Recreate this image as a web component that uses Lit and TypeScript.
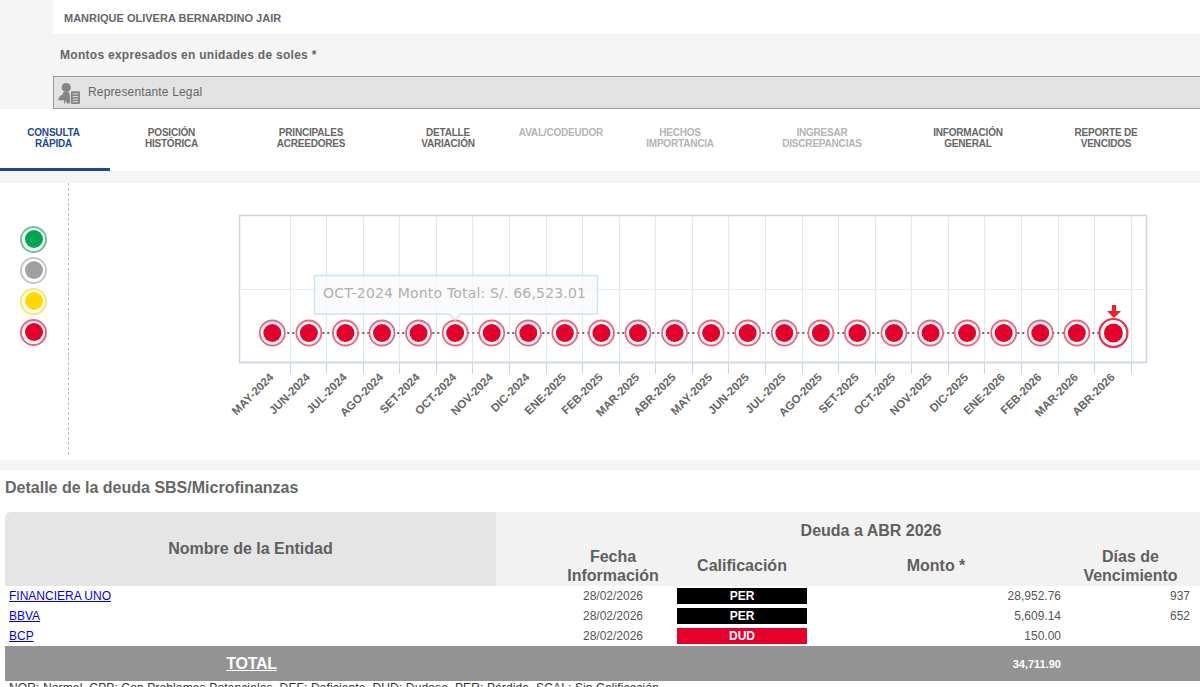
import { LitElement, html, css, svg } from "lit";
import { customElement } from "lit/decorators.js";

const MONTHS = [
  "MAY-2024","JUN-2024","JUL-2024","AGO-2024","SET-2024","OCT-2024","NOV-2024","DIC-2024",
  "ENE-2025","FEB-2025","MAR-2025","ABR-2025","MAY-2025","JUN-2025","JUL-2025","AGO-2025",
  "SET-2025","OCT-2025","NOV-2025","DIC-2025","ENE-2026","FEB-2026","MAR-2026","ABR-2026",
];
const X0 = 272.3;
const STEP = 36.57;
const CY = 333;

const TABS: { label: string[]; cls: string }[] = [
  { label: ["CONSULTA", "RÁPIDA"], cls: "active" },
  { label: ["POSICIÓN", "HISTÓRICA"], cls: "" },
  { label: ["PRINCIPALES", "ACREEDORES"], cls: "" },
  { label: ["DETALLE", "VARIACIÓN"], cls: "" },
  { label: ["AVAL/CODEUDOR"], cls: "off" },
  { label: ["HECHOS", "IMPORTANCIA"], cls: "off" },
  { label: ["INGRESAR", "DISCREPANCIAS"], cls: "off" },
  { label: ["INFORMACIÓN", "GENERAL"], cls: "" },
  { label: ["REPORTE DE", "VENCIDOS"], cls: "" },
];

const ROWS = [
  { name: "FINANCIERA UNO", date: "28/02/2026", cal: "PER", cls: "per", monto: "28,952.76", dias: "937" },
  { name: "BBVA", date: "28/02/2026", cal: "PER", cls: "per", monto: "5,609.14", dias: "652" },
  { name: "BCP", date: "28/02/2026", cal: "DUD", cls: "dud", monto: "150.00", dias: "" },
];

const LIGHTS = ["green", "gray", "yellow", "red"];

@customElement("app-root")
export class AppRoot extends LitElement {
  static styles = css`
    :host {
      display: block;
      width: 1200px;
      height: 687px;
      overflow: hidden;
      background: #f5f5f5;
      font-family: "Liberation Sans", Arial, sans-serif;
      color: #666;
    }
    .name {
      margin-left: 53px;
      height: 34px;
      background: #fff;
      padding-left: 11px;
      font-size: 11px;
      font-weight: 700;
      line-height: 37px;
      color: #666;
      box-sizing: border-box;
    }
    .montos {
      height: 42px;
      padding-left: 60px;
      font-size: 12px;
      font-weight: 700;
      line-height: 42px;
      letter-spacing: 0.28px;
      color: #666;
      box-sizing: border-box;
    }
    .rep {
      margin-left: 53px;
      height: 33px;
      box-sizing: border-box;
      background: #e3e3e3;
      border: 1px solid #999;
      border-right: 0;
      display: flex;
      align-items: center;
      gap: 8px;
      padding-left: 4px;
      font-size: 12px;
      letter-spacing: 0.15px;
      color: #666;
    }
    .rep span { padding-bottom: 2px; }
    .rep svg { display: block; }
    .tabs {
      display: grid;
      grid-template-columns: 110px 123px 156px 118px 108px 130px 154px 138px 138px 25px;
      height: 62px;
      background: #fff;
    }
    .tab {
      box-sizing: border-box;
      padding-top: 18px;
      text-align: center;
      font-size: 10px;
      letter-spacing: -0.2px;
      line-height: 11px;
      font-weight: 700;
      color: #666;
    }
    .tab span { display: block; }
    .tab.active {
      color: #1b4a91;
      border-bottom: 3px solid #1b4a91;
      padding-right: 3px;
    }
    .tab.off { color: #b4b4b4; }
    .gap { height: 12px; }
    .chart {
      display: flex;
      height: 277px;
      background: #fff;
    }
    .side {
      width: 69px;
      height: 272px;
      box-sizing: border-box;
      border-right: 1px dashed #bbb;
      display: flex;
      flex-direction: column;
      align-items: flex-start;
      gap: 4px;
      padding: 42.5px 0 0 20px;
      flex: none;
    }
    .light {
      width: 27px;
      height: 27px;
      box-sizing: border-box;
      border-radius: 50%;
      border-width: 2px;
      border-style: solid;
      padding: 2.5px;
    }
    .light i { display: block; width: 100%; height: 100%; border-radius: 50%; }
    .light.green { border-color: #6cc598; } .light.green i { background: #00a651; }
    .light.gray { border-color: #c6c6c8; } .light.gray i { background: #a0a0a3; }
    .light.yellow { border-color: #ffe566; } .light.yellow i { background: #ffd800; }
    .light.red { border-color: #f0617a; } .light.red i { background: #e4002b; }
    .plot { display: block; flex: none; }
    .axis { font-size: 11.5px; font-weight: 700; fill: #666; font-family: "Liberation Sans", Arial, sans-serif; }
    .tip { font-size: 14px; fill: #b0b0b0; font-family: "DejaVu Sans", sans-serif; letter-spacing: 0.18px; }
    .detail {
      background: #fff;
      margin-top: 10px;
      height: 217px;
      overflow: hidden;
    }
    h2 {
      margin: 0;
      padding: 9px 0 0 5px;
      height: 42px;
      box-sizing: border-box;
      font-size: 16px;
      line-height: 18px;
      font-weight: 700;
      color: #666;
    }
    .table {
      margin-left: 5px;
      display: grid;
      grid-template-columns: 491px 57px 120px 138px 250px 139px;
    }
    .th {
      background: #f2f2f2;
      font-size: 16px;
      font-weight: 700;
      line-height: 19.5px;
      color: #5f5f5f;
      text-align: center;
    }
    .th.entity {
      grid-row: 1 / span 2;
      background: #e5e5e5;
      border-top-left-radius: 6px;
      display: flex;
      align-items: center;
      justify-content: center;
      padding-bottom: 1px;
      box-sizing: border-box;
    }
    .th.debt {
      grid-column: 2 / span 5;
      height: 33px;
      line-height: 37px;
      padding-left: 46px;
      box-sizing: border-box;
    }
    .th.sub {
      height: 41px;
      display: flex;
      align-items: center;
      justify-content: center;
      padding-top: 1px;
      box-sizing: border-box;
    }
    .td {
      height: 20px;
      line-height: 20px;
      font-size: 12px;
      color: #555;
    }
    .td a { color: #0000ee; text-decoration: underline; padding-left: 4px; }
    .td.c { text-align: center; }
    .td.r { text-align: right; }
    .td.d { padding-right: 10px; }
    .badge {
      display: block;
      margin: 2px 4px;
      height: 16px;
      line-height: 16px;
      text-align: center;
      font-weight: 700;
      color: #fff;
    }
    .badge.per { background: #000; }
    .badge.dud { background: #e4002b; }
    .total {
      grid-column: 1 / -1;
      display: grid;
      grid-template-columns: 491px 57px 120px 138px 250px 139px;
      height: 35px;
      background: #939393;
      color: #fff;
      font-weight: 700;
      align-items: center;
    }
    .total u { font-size: 16px; text-align: center; padding-left: 2px; letter-spacing: -0.3px; }
    .total b { grid-column: 5; font-size: 11px; text-align: right; }
    .legend {
      margin: 1px 0 0 9px;
      font-size: 12px;
      line-height: 13px;
      letter-spacing: 0.13px;
      color: #333;
      white-space: nowrap;
    }
  `;

  private marker(x: number, big: boolean) {
    return svg`
      <circle cx=${x} cy=${CY} r=${big ? 14 : 12.5} fill="#fff" stroke=${big ? "#e8304f" : "#f0617a"} stroke-width=${big ? 2.2 : 1.8}></circle>
      <circle cx=${x} cy=${CY} r=${big ? 9.5 : 9} fill="#e4002b"></circle>
    `;
  }

  private chart() {
    const xs = MONTHS.map((_, i) => X0 + i * STEP);
    return html`<svg class="plot" width="1131" height="277" viewBox="69 183 1131 277">
      <rect x="239.5" y="215.5" width="907" height="147" fill="#fff" stroke="#d2d4da" stroke-width="1.5"></rect>
      <line x1="239.5" x2="1146.5" y1="289.5" y2="289.5" stroke="#ececec" stroke-width="1.2"></line>
      ${xs.map((c) => c + STEP / 2).map(
        (x) => svg`
          <line x1=${Math.round(x) - 0.5} x2=${Math.round(x) - 0.5} y1="216" y2="362" stroke="#e4e7ef" stroke-width="1.2"></line>
          <line x1=${Math.round(x) - 0.5} x2=${Math.round(x) - 0.5} y1="362" y2="374" stroke="#ccd6eb" stroke-width="1.2"></line>`
      )}
      <line x1="239" x2="1147" y1="362.5" y2="362.5" stroke="#ccd6eb" stroke-width="1.5"></line>
      <line x1=${X0} x2=${xs[23]} y1=${CY} y2=${CY} stroke="#666" stroke-width="2" stroke-dasharray="2 3"></line>
      ${xs.map((x, i) => this.marker(x, i === 23))}
      <path d="M1112 305h4v6h5l-7 7-7-7h5z" fill="#e8212e"></path>
      ${MONTHS.map(
        (m, i) => svg`<text class="axis" text-anchor="end" transform="translate(${xs[i] + 2} 378) rotate(-45)">${m}</text>`
      )}
      <path d="M314.5 275.5h283v38.5H461l-6 6-6-6H314.5z" fill="#fafafa" fill-opacity="0.72" stroke="#cfe2f5" stroke-width="1.5"></path>
      <text class="tip" x="323" y="298">OCT-2024 Monto Total: S/. 66,523.01</text>
    </svg>`;
  }

  render() {
    return html`
      <div class="name">MANRIQUE OLIVERA BERNARDINO JAIR</div>
      <div class="montos">Montos expresados en unidades de soles *</div>
      <div class="rep">
        <svg width="22" height="22" viewBox="0 0 24 24" fill="#858585">
          <circle cx="9" cy="6" r="5"></circle>
          <path d="M6 11h6l.5 3H13v9.5H9.5l-1-4-1 4H6.5v-3.5L.5 20c-.6-2.5 1.3-5 4.5-6.5z"></path>
          <rect x="14" y="10" width="10" height="14" rx="1.4"></rect>
          <path d="M16 13h6M16 15.8h6M16 18.6h6M16 21.4h6" stroke="#e3e3e3" stroke-width="1"></path>
        </svg>
        <span>Representante Legal</span>
      </div>
      <nav class="tabs">
        ${TABS.map(
          (t) => html`<div class="tab ${t.cls}">${t.label.map((l) => html`<span>${l}</span>`)}</div>`
        )}
      </nav>
      <div class="gap"></div>
      <section class="chart">
        <div class="side">
          ${LIGHTS.map((l) => html`<div class="light ${l}"><i></i></div>`)}
        </div>
        ${this.chart()}
      </section>
      <section class="detail">
        <h2>Detalle de la deuda SBS/Microfinanzas</h2>
        <div class="table">
          <div class="th entity">Nombre de la Entidad</div>
          <div class="th debt">Deuda a ABR 2026</div>
          <div class="th sub"></div>
          <div class="th sub">Fecha<br />Información</div>
          <div class="th sub">Calificación</div>
          <div class="th sub">Monto *</div>
          <div class="th sub">Días de<br />Vencimiento</div>
          ${ROWS.map(
            (r) => html`
              <div class="td"><a href="#">${r.name}</a></div>
              <div class="td"></div>
              <div class="td c">${r.date}</div>
              <div class="td c"><span class="badge ${r.cls}">${r.cal}</span></div>
              <div class="td r">${r.monto}</div>
              <div class="td r d">${r.dias}</div>
            `
          )}
          <div class="total">
            <u>TOTAL</u>
            <b>34,711.90</b>
          </div>
        </div>
        <div class="legend">NOR: Normal, CPP: Con Problemas Potenciales, DEF: Deficiente, DUD: Dudoso, PER: Pérdida, SCAL: Sin Calificación</div>
      </section>
    `;
  }
}
